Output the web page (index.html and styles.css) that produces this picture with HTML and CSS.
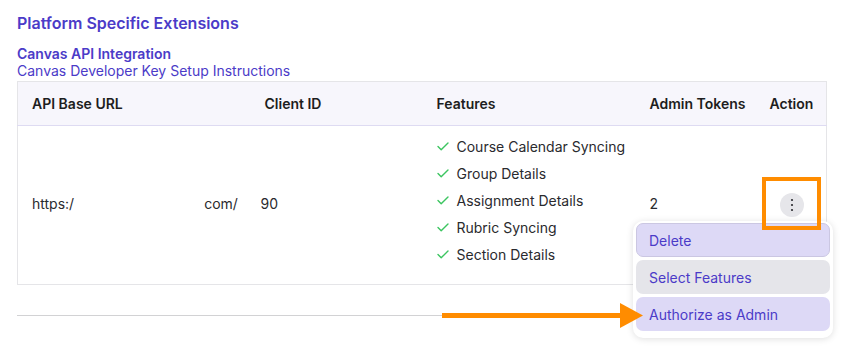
FILE: index.html
```html
<!DOCTYPE html>
<html>
<head>
<meta charset="utf-8">
<link rel="stylesheet" href="styles.css">
</head>
<body>
<div class="page">
  <h2 class="title">Platform Specific Extensions</h2>
  <div class="integration">
    <div class="int-name">Canvas API Integration</div>
    <a class="int-link">Canvas Developer Key Setup Instructions</a>
  </div>
  <table class="ext-table">
    <colgroup>
      <col class="c1"><col class="c2"><col class="c3"><col class="c4"><col class="c5">
    </colgroup>
    <thead>
      <tr>
        <th>API Base URL</th>
        <th>Client ID</th>
        <th>Features</th>
        <th>Admin Tokens</th>
        <th>Action</th>
      </tr>
    </thead>
    <tbody>
      <tr>
        <td>https:/<span class="redact"></span>com/</td>
        <td><span class="client">90</span></td>
        <td class="feat-cell">
          <ul class="features">
            <li><svg class="check" viewBox="0 0 12 9"><path d="M1 4.6 L4.2 7.8 L11 1"/></svg><span>Course Calendar Syncing</span></li>
            <li><svg class="check" viewBox="0 0 12 9"><path d="M1 4.6 L4.2 7.8 L11 1"/></svg><span>Group Details</span></li>
            <li><svg class="check" viewBox="0 0 12 9"><path d="M1 4.6 L4.2 7.8 L11 1"/></svg><span>Assignment Details</span></li>
            <li><svg class="check" viewBox="0 0 12 9"><path d="M1 4.6 L4.2 7.8 L11 1"/></svg><span>Rubric Syncing</span></li>
            <li><svg class="check" viewBox="0 0 12 9"><path d="M1 4.6 L4.2 7.8 L11 1"/></svg><span>Section Details</span></li>
          </ul>
        </td>
        <td>2</td>
        <td class="action-cell">
          <button class="kebab" aria-label="Actions">
            <svg viewBox="0 0 4 14" width="4" height="14"><circle cx="2" cy="2" r="1.1"/><circle cx="2" cy="7" r="1.1"/><circle cx="2" cy="12" r="1.1"/></svg>
          </button>
        </td>
      </tr>
    </tbody>
  </table>
  <hr class="divider">

  <div class="menu">
    <div class="menu-item item-delete">Delete</div>
    <div class="menu-item item-select">Select Features</div>
    <div class="menu-item item-auth">Authorize as Admin</div>
  </div>
  <div class="highlight"></div>
  <svg class="arrow" viewBox="0 0 201 25" width="201" height="25">
    <rect x="0" y="10" width="182" height="5" fill="#ff8c00"/>
    <polygon points="178,0 201,12.5 178,25" fill="#ff8c00"/>
  </svg>
</div>
</body>
</html>
```

FILE: styles.css
```css
html, body {
  margin: 0;
  background: #ffffff;
}

.page {
  position: relative;
  height: 349px;
  padding: 11px 15px 0 17px;
  box-sizing: border-box;
  font-family: Inter, "Noto Sans", "Liberation Sans", sans-serif;
  color: #2a2a2e;
}

.title {
  margin: 0;
  font-size: 16px;
  line-height: 24px;
  font-weight: 600;
  color: #4b3bc8;
}

.integration {
  margin-top: 10px;
  display: flex;
  flex-direction: column;
}

.int-name {
  font-size: 14px;
  line-height: 17px;
  font-weight: 600;
  color: #4b3bc8;
}

.int-link {
  font-size: 14px;
  line-height: 17px;
  color: #4b3bc8;
  text-decoration: none;
}

.ext-table {
  margin-top: 2px;
  width: 809px;
  border-collapse: collapse;
  table-layout: fixed;
  border: 1px solid #e5e5e8;
  font-size: 14px;
}

.c1 { width: 233px; }
.c2 { width: 172px; }
.c3 { width: 213px; }
.c4 { width: 120px; }
.c5 { width: 71px; }

.ext-table th {
  background: #f7f6fc;
  height: 43px;
  padding: 0 14px;
  text-align: left;
  font-weight: 600;
  color: #1d1d20;
  border-bottom: 1px solid #dedbf2;
  white-space: nowrap;
}

.ext-table td {
  padding: 0 14px 3px;
  vertical-align: middle;
  color: #2a2a2e;
  white-space: nowrap;
}

.ext-table td.feat-cell {
  padding: 7px 0 16px 14px;
}

.ext-table td.action-cell {
  padding: 0 14px;
}

.redact {
  display: inline-block;
  width: 130px;
}

.client {
  margin-left: -4px;
}

.features {
  list-style: none;
  margin: 0;
  padding: 0;
}

.features li {
  display: flex;
  align-items: center;
  gap: 8px;
  height: 27px;
  line-height: 27px;
  white-space: nowrap;
}

.check {
  flex-shrink: 0;
  width: 12px;
  height: 9px;
  fill: none;
  stroke: #3cc560;
  stroke-width: 1.4;
  stroke-linecap: round;
  stroke-linejoin: round;
}

.kebab {
  margin-left: 10px;
  width: 24px;
  height: 24px;
  border: 0;
  padding: 0;
  border-radius: 50%;
  background: #e6e6ea;
  display: inline-flex;
  align-items: center;
  justify-content: center;
  fill: #2b2b30;
}

.divider {
  margin: 30px 0 0;
  width: 809px;
  border: 0;
  border-top: 1px solid #d2d2d4;
  height: 0;
}

.menu {
  position: absolute;
  left: 633px;
  top: 221px;
  width: 200px;
  box-sizing: border-box;
  padding: 2px 3px 7px;
  background: #ffffff;
  border-radius: 10px;
  box-shadow: 0 1px 7px rgba(0, 0, 0, 0.13);
  display: flex;
  flex-direction: column;
  gap: 3px;
}

.menu-item {
  height: 34px;
  box-sizing: border-box;
  border-radius: 7px;
  padding-left: 13px;
  display: flex;
  align-items: center;
  font-size: 14px;
  color: #4b3bc8;
}

.item-delete {
  background: #ddd9f6;
  border: 1px solid #cbc7e2;
  padding-left: 12px;
}

.item-select {
  background: #e5e5ea;
}

.item-auth {
  background: #ddd9f6;
}

.highlight {
  position: absolute;
  left: 762px;
  top: 177px;
  width: 59px;
  height: 53px;
  box-sizing: border-box;
  border: 4.5px solid #ff8c00;
}

.arrow {
  position: absolute;
  left: 442px;
  top: 303px;
}
```
